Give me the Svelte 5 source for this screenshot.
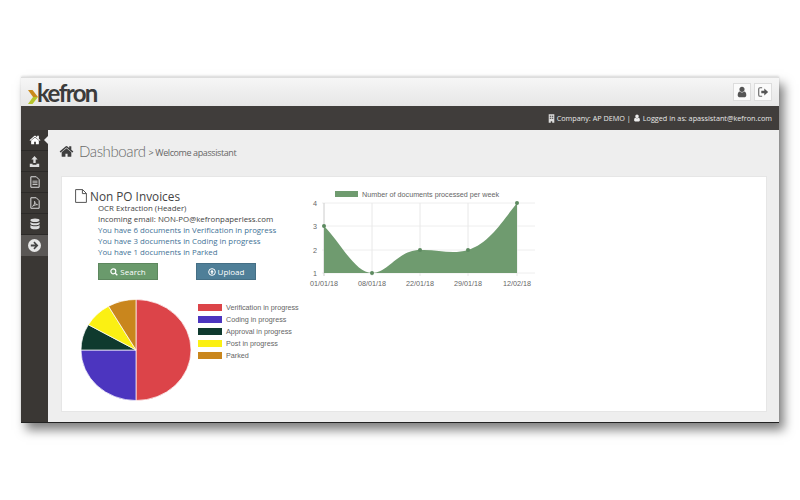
<script>
  const links = [
    'You have 6 documents in Verification in progress',
    'You have 3 documents in Coding in progress',
    'You have 1 documents in Parked'
  ];

  // pie slices, clockwise from the top
  const slices = [
    { label: 'Verification in progress', value: 6, color: '#dc4449' },
    { label: 'Coding in progress', value: 3, color: '#4c35bf' },
    { label: 'Approval in progress', value: 1, color: '#0f3a2e' },
    { label: 'Post in progress', value: 1, color: '#fbf013' },
    { label: 'Parked', value: 1, color: '#c9861d' }
  ];
  const total = slices.reduce((sum, s) => sum + s.value, 0);

  function slicePath(start, value) {
    const a0 = (start / total) * Math.PI * 2 - Math.PI / 2;
    const a1 = ((start + value) / total) * Math.PI * 2 - Math.PI / 2;
    const large = value / total > 0.5 ? 1 : 0;
    const cx = 56, cy = 51, rx = 55, ry = 50.5;
    return `M${cx} ${cy}L${cx + rx * Math.cos(a0)} ${cy + ry * Math.sin(a0)}A${rx} ${ry} 0 ${large} 1 ${cx + rx * Math.cos(a1)} ${cy + ry * Math.sin(a1)}Z`;
  }

  let running = 0;
  const pie = slices.map((s) => {
    const d = slicePath(running, s.value);
    running += s.value;
    return { ...s, d };
  });

  // line chart
  const xs = [29, 77, 125, 173, 222];
  const labels = ['01/01/18', '08/01/18', '22/01/18', '29/01/18', '12/02/18'];
  const ys = { 4: 15, 3: 38, 2: 62, 1: 85 };
  const points = [[29, 38], [77, 85], [125, 62], [173, 62], [222, 15]];
  const curve = 'M29 38C45 54 60 85 77 85C93 85 103 62 125 62C142 61 156 67 173 62C195 55 208 32 222 15';

  const home = 'M1472 992v480q0 26-19 45t-45 19h-384v-384h-256v384h-384q-26 0-45-19t-19-45v-480q0-1 .5-3t.5-3l575-474 575 474q1 2 1 6zm223-69l-62 74q-8 9-21 11h-3q-13 0-21-7l-692-577-692 577q-12 8-24 7-13-2-21-11l-62-74q-8-10-7-23.5t11-21.5l719-599q32-26 76-26t76 26l244 204v-195q0-14 9-23t23-9h192q14 0 23 9t9 23v408l219 182q10 8 11 21.5t-7 23.5z';
  const user = 'M1536 1399q0 109-62.5 187t-150.5 78h-854q-88 0-150.5-78t-62.5-187q0-85 8.5-160.5t31.5-152 58.5-131 94-89 134.5-34.5q131 128 313 128t313-128q76 0 134.5 34.5t94 89 58.5 131 31.5 152 8.5 160.5zm-256-887q0 159-112.5 271.5t-271.5 112.5-271.5-112.5-112.5-271.5 112.5-271.5 271.5-112.5 271.5 112.5 112.5 271.5z';
</script>

<div class="page">
  <div class="window">
    <header class="top">
      <div class="logo">
        <svg class="chevron" viewBox="0 0 11 14" width="11" height="14">
          <path d="M0 0h4.500l5.500 7H5z" fill="#c98a1c" />
          <path d="M5 7h5l-5.500 7H0z" fill="#b5c42c" />
        </svg>
        <span>kefron</span>
      </div>
      <div class="top-buttons">
        <button aria-label="Profile">
          <svg viewBox="0 0 1792 1792" width="12" height="12"><path d={user} fill="#555" /></svg>
        </button>
        <button aria-label="Sign out">
          <svg viewBox="0 0 14 14" width="12" height="12">
            <path d="M6 2H3.500A1.500 1.500 0 0 0 2 3.500v7A1.500 1.500 0 0 0 3.500 12H6" fill="none" stroke="#666" stroke-width="1.300" />
            <path d="M5 5.500h3.500V2.800L13 7l-4.500 4.200V8.500H5z" fill="#555" />
          </svg>
        </button>
      </div>
    </header>

    <div class="infobar">
      <svg viewBox="0 0 10 12" width="7" height="9">
        <path d="M1 0h8v12H6V10H4v2H1zM2.500 2v1.500h2V2zm3 0v1.500h2V2zm-3 3v1.500h2V5zm3 0v1.500h2V5z" fill="#ddd" fill-rule="evenodd" />
      </svg>
      <span>Company: AP DEMO |</span>
      <svg viewBox="0 0 1792 1792" width="8" height="8"><path d={user} fill="#eee" /></svg>
      <span>Logged in as: apassistant@kefron.com</span>
    </div>

    <div class="body">
      <nav class="sidebar">
        <div class="item active">
          <svg viewBox="0 0 1792 1792" width="12" height="12"><path d={home} fill="#fff" /></svg>
        </div>
        <div class="item">
          <svg viewBox="0 0 14 14" width="11" height="11">
            <path d="M7 0l4 4.500H8.500V9h-3V4.500H3z" fill="#ddd" />
            <path d="M1 10h3.500v1h5v-1H13v4H1z" fill="#ddd" />
          </svg>
        </div>
        <div class="item">
          <svg viewBox="0 0 12 14" width="10" height="12">
            <path d="M1 .7h6.500L11 4.200v9.100H1z" fill="none" stroke="#ddd" stroke-width="1.200" />
            <path d="M3 6h6M3 8h6M3 10h6" stroke="#ddd" />
          </svg>
        </div>
        <div class="item">
          <svg viewBox="0 0 12 14" width="10" height="12">
            <path d="M1 .7h6.500L11 4.200v9.100H1z" fill="none" stroke="#ddd" stroke-width="1.200" />
            <path d="M3 11c2-1 3-4 2.500-6 .5 2 1.500 3.500 3.500 4-2 0-4 .5-6 2z" fill="none" stroke="#ddd" />
          </svg>
        </div>
        <div class="item">
          <svg viewBox="0 0 12 14" width="10" height="12">
            <ellipse cx="6" cy="2.500" rx="5.500" ry="2.200" fill="#ddd" />
            <path d="M.5 4.600c1 2 10 2 11 0v2.300c-1 2-10 2-11 0zM.5 8.200c1 2 10 2 11 0v3.200c-1 2.600-10 2.600-11 0z" fill="#ddd" />
          </svg>
        </div>
        <div class="item expand">
          <svg viewBox="0 0 14 14" width="13" height="13">
            <circle cx="7" cy="7" r="7" fill="#e8e8e8" />
            <path d="M7 2.800L11.200 7 7 11.200 5.800 10l2-2H3V6h4.800l-2-2z" fill="#444" />
          </svg>
        </div>
      </nav>

      <main class="content">
        <div class="heading">
          <svg viewBox="0 0 1792 1792" width="15" height="15"><path d={home} fill="#3f3f3f" /></svg>
          <h1>Dashboard</h1>
          <span>&gt; Welcome apassistant</span>
        </div>

        <section class="card">
          <div class="top-row">
            <div class="summary">
              <h2>
                <svg viewBox="0 0 12 14" width="12" height="14">
                  <path d="M.6.600h7l3.800 3.800v9H.6zM7.400.600v4h4" fill="none" stroke="#555" stroke-width="1" />
                </svg>
                Non PO Invoices
              </h2>
              <div class="lines">
                <p>OCR Extraction (Header)</p>
                <p>Incoming email: NON-PO@kefronpaperless.com</p>
                {#each links as link}
                  <p class="link">{link}</p>
                {/each}
              </div>
              <div class="actions">
                <button class="search">
                  <svg viewBox="0 0 12 12" width="8" height="8">
                    <circle cx="5" cy="5" r="3.700" fill="none" stroke="#fff" stroke-width="1.800" />
                    <path d="M7.800 7.800L11 11" stroke="#fff" stroke-width="2" />
                  </svg>
                  Search
                </button>
                <button class="upload">
                  <svg viewBox="0 0 12 12" width="8" height="8">
                    <circle cx="6" cy="6" r="5" fill="none" stroke="#fff" stroke-width="1.500" />
                    <path d="M6 2.800L8.800 6.200H7V9H5V6.200H3.200z" fill="#fff" />
                  </svg>
                  Upload
                </button>
              </div>
            </div>

            <svg class="line-chart" viewBox="0 0 240 110" width="240" height="110">
              <rect x="40" y="3" width="23" height="6" fill="#6f9b6f" />
              <text x="67" y="9" class="tick">Number of documents processed per week</text>
              {#each Object.entries(ys) as [label, y]}
                <line x1="27" x2="240" y1={y} y2={y} stroke="#eee" />
                <text x="20" y={y + 3} class="tick" text-anchor="middle">{label}</text>
              {/each}
              {#each xs as x, i}
                <line x1={x} x2={x} y1="15" y2="88" stroke={i === 0 ? '#ccc' : '#e8e8e8'} />
                <text x={x} y="98" class="tick" text-anchor="middle">{labels[i]}</text>
              {/each}
              <path d="{curve}V85H29Z" fill="#6f9b6f" />
              {#each points as [x, y]}
                <circle cx={x} cy={y} r="2" fill="#5d8a60" />
              {/each}
            </svg>
          </div>

          <div class="bottom-row">
            <svg class="pie" viewBox="0 0 112 102" width="112" height="102">
              {#each pie as slice}
                <path d={slice.d} fill={slice.color} stroke="#fff" stroke-width="0.700" />
              {/each}
            </svg>
            <ul class="pie-legend">
              {#each slices as slice}
                <li>
                  <i style="background: {slice.color}"></i>
                  {slice.label}
                </li>
              {/each}
            </ul>
          </div>
        </section>
      </main>
    </div>
  </div>
</div>

<style>
  :global(body) {
    margin: 0;
    background: #fff;
  }

  .page {
    width: 800px;
    height: 500px;
    padding: 77px 21px 0;
    box-sizing: border-box;
    overflow: hidden;
    font-family: "Open Sans", sans-serif;
  }

  .window {
    height: 346px;
    display: flex;
    flex-direction: column;
    box-shadow: 5px 7px 10px rgba(0, 0, 0, 0.5), 0 -1px 2px rgba(0, 0, 0, 0.12);
    border-bottom: 1px solid #222;
    box-sizing: border-box;
  }

  .top {
    height: 29px;
    flex: none;
    display: flex;
    align-items: center;
    justify-content: space-between;
    padding: 0 7px;
    background: linear-gradient(#f6f6f6, #e6e6e6);
    border-top: 1px solid #ddd;
    box-sizing: border-box;
  }

  .logo {
    display: flex;
    align-items: flex-end;
    height: 26px;
    margin-top: 1px;
  }

  .chevron {
    margin-bottom: 2px;
    margin-right: -2px;
  }

  .logo span {
    font-family: Lato, sans-serif;
    font-size: 24px;
    font-weight: 700;
    line-height: 26px;
    height: 26px;
    letter-spacing: -1.6px;
    color: #3b3b3b;
  }

  .top-buttons {
    display: flex;
    gap: 3px;
  }

  .top-buttons button {
    width: 18px;
    height: 18px;
    padding: 0;
    display: flex;
    align-items: center;
    justify-content: center;
    background: #fbfbfb;
    border: 1px solid #ddd;
  }

  .infobar {
    height: 24px;
    flex: none;
    display: flex;
    align-items: center;
    justify-content: flex-end;
    gap: 2px;
    padding-right: 7px;
    background: #403d3b;
    color: #e8e8e8;
    font-size: 7.250px;
  }

  .body {
    flex: 1;
    display: flex;
    min-height: 0;
  }

  .sidebar {
    width: 27px;
    flex: none;
    background: #3a3734;
    display: flex;
    flex-direction: column;
  }

  .item {
    height: 21px;
    flex: none;
    display: flex;
    align-items: center;
    justify-content: center;
    position: relative;
    box-sizing: border-box;
    border-bottom: 1px solid #2c2a28;
  }

  .active::after {
    content: "";
    position: absolute;
    right: 0;
    top: 6px;
    border: 4px solid transparent;
    border-right-color: #eee;
    border-left-width: 0;
  }

  .expand {
    background: #5a5755;
    border-bottom: 0;
  }

  .content {
    flex: 1;
    background: #eee;
    padding: 0 12px 0 13px;
    min-width: 0;
  }

  .heading {
    height: 46px;
    padding-bottom: 4px;
    box-sizing: border-box;
    display: flex;
    align-items: center;
    color: #666;
  }

  .heading svg {
    margin: 0 5px 0 -2px;
  }

  h1 {
    margin: 0 3px 0 0;
    font-family: Lato, sans-serif;
    font-size: 15px;
    font-weight: 300;
    letter-spacing: -0.4px;
    color: #6a6a6a;
  }

  .heading span {
    font-size: 9px;
    letter-spacing: -0.4px;
    margin-top: 2px;
  }

  .card {
    height: 236px;
    background: #fff;
    padding: 11px 14px 0 13px;
    box-sizing: border-box;
    border: 1px solid #e6e6e6;
  }

  .top-row {
    display: flex;
    justify-content: space-between;
    height: 110px;
  }

  .top-row .line-chart {
    margin: 0 217px 0 0;
    flex: none;
  }

  .summary {
    width: 220px;
    flex: none;
  }

  h2 {
    margin: 0;
    height: 15px;
    display: flex;
    align-items: center;
    gap: 3px;
    font-size: 11.800px;
    font-weight: 400;
    color: #444;
    white-space: nowrap;
  }

  .lines {
    margin: 0 0 0 23px;
    font-size: 7.850px;
    line-height: 11px;
    color: #444;
    white-space: nowrap;
  }

  .lines p {
    margin: 0;
  }

  .link {
    color: #3f7296;
  }

  .actions {
    display: flex;
    gap: 38px;
    margin: 5px 0 0 23px;
  }

  .actions button {
    width: 60px;
    height: 17px;
    padding: 0;
    display: flex;
    align-items: center;
    justify-content: center;
    gap: 2px;
    color: #fff;
    font-family: inherit;
    font-size: 8px;
    border: 1px solid rgba(0, 0, 0, 0.12);
  }

  .search {
    background: #6a9a6c;
  }

  .upload {
    background: #4f7f98;
  }

  .bottom-row {
    display: flex;
    margin-top: 1px;
  }

  .pie {
    margin-left: 5px;
    flex: none;
  }

  .pie-legend {
    margin: 2px 0 0 6px;
    padding: 0;
    list-style: none;
    font-family: "Liberation Sans", sans-serif;
    font-size: 7.200px;
    color: #666;
  }

  .pie-legend li {
    height: 12px;
    display: flex;
    align-items: center;
    gap: 4px;
  }

  .pie-legend i {
    display: block;
    width: 24px;
    height: 7px;
  }

  .tick {
    font-family: "Liberation Sans", sans-serif;
    font-size: 7.200px;
    fill: #666;
  }
</style>
